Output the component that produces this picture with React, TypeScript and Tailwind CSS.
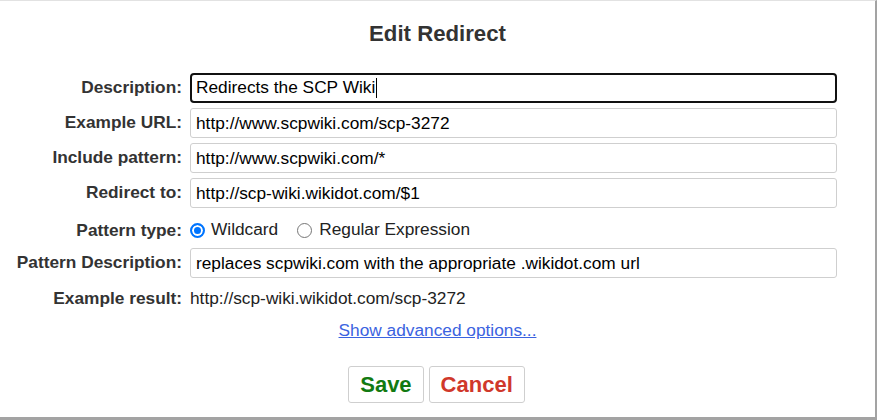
import { useState } from 'react';

// Campos do formulário de redirect
const campos = [
  { label: 'Description:', valor: 'Redirects the SCP Wiki', foco: true },
  { label: 'Example URL:', valor: 'http://www.scpwiki.com/scp-3272' },
  { label: 'Include pattern:', valor: 'http://www.scpwiki.com/*' },
  { label: 'Redirect to:', valor: 'http://scp-wiki.wikidot.com/$1' },
];

const radioCls =
  'appearance-none w-[15px] h-[15px] m-0 rounded-full border border-[#767676] bg-white checked:border-2 checked:border-[#0075ff] checked:bg-[#0075ff] checked:shadow-[inset_0_0_0_2px_white]';

export default function App() {
  const [tipo, setTipo] = useState('wildcard');

  return (
    <div className="w-[877px] h-[420px] bg-white border-t border-t-[#e2e2e2] border-r-2 border-r-[#a3a3a3] border-b-[3px] border-b-[#a3a3a3] font-['Liberation_Sans',Arial,sans-serif] text-[17.3px] text-[#222] overflow-hidden">
      <h1 className="mt-[20px] text-center text-[22.2px] leading-[26px] font-bold text-[#333]">Edit Redirect</h1>

      <div className="mt-[26px] grid grid-cols-[182px_647px] gap-x-2 gap-y-[5px] items-center">
        {campos.map((c) => (
          <div key={c.label} className="contents">
            <label className="text-right font-bold text-[#333]">{c.label}</label>
            {c.foco ? (
              <div className="h-[30px] flex items-center border-2 border-[#111] rounded-[4px] pl-[4px] text-black">
                {c.valor}
                <span className="ml-[1px] w-px h-[20px] bg-black" />
              </div>
            ) : (
              <input
                readOnly
                defaultValue={c.valor}
                className="h-[30px] border border-[#cfcfcf] rounded-[3px] pl-[5px] text-black outline-none"
              />
            )}
          </div>
        ))}

        <label className="text-right font-bold text-[#333] h-[30px] pt-[4px] leading-[26px]">Pattern type:</label>
        <div className="flex items-center h-[30px] pt-[4px]">
          <label className="flex items-center">
            <input
              type="radio"
              name="tipo"
              checked={tipo === 'wildcard'}
              onChange={() => setTipo('wildcard')}
              className={radioCls}
            />
            <span className="ml-[6px]">Wildcard</span>
          </label>
          <label className="flex items-center ml-[19px]">
            <input
              type="radio"
              name="tipo"
              checked={tipo === 'regex'}
              onChange={() => setTipo('regex')}
              className={radioCls}
            />
            <span className="ml-[7px]">Regular Expression</span>
          </label>
        </div>

        <label className="text-right font-bold text-[#333]">Pattern Description:</label>
        <input
          readOnly
          defaultValue="replaces scpwiki.com with the appropriate .wikidot.com url"
          className="h-[30px] border border-[#cfcfcf] rounded-[3px] pl-[5px] text-black outline-none"
        />

        <label className="text-right font-bold text-[#333] h-[30px] leading-[30px]">Example result:</label>
        <div className="h-[30px] leading-[30px]">http://scp-wiki.wikidot.com/scp-3272</div>
      </div>

      <div className="mt-[7px] text-center leading-[20px]">
        <a href="#" className="text-[#3b63e0] underline">Show advanced options...</a>
      </div>

      <div className="mt-[26px] flex justify-center gap-[5px] pr-[2px]">
        <button className="h-[37px] px-[11px] border border-[#cfcfcf] rounded-[3px] bg-white text-[22px] font-bold text-[#127a12]">Save</button>
        <button className="h-[37px] px-[11px] border border-[#cfcfcf] rounded-[3px] bg-white text-[22px] font-bold text-[#d0382b]">Cancel</button>
      </div>
    </div>
  );
}
